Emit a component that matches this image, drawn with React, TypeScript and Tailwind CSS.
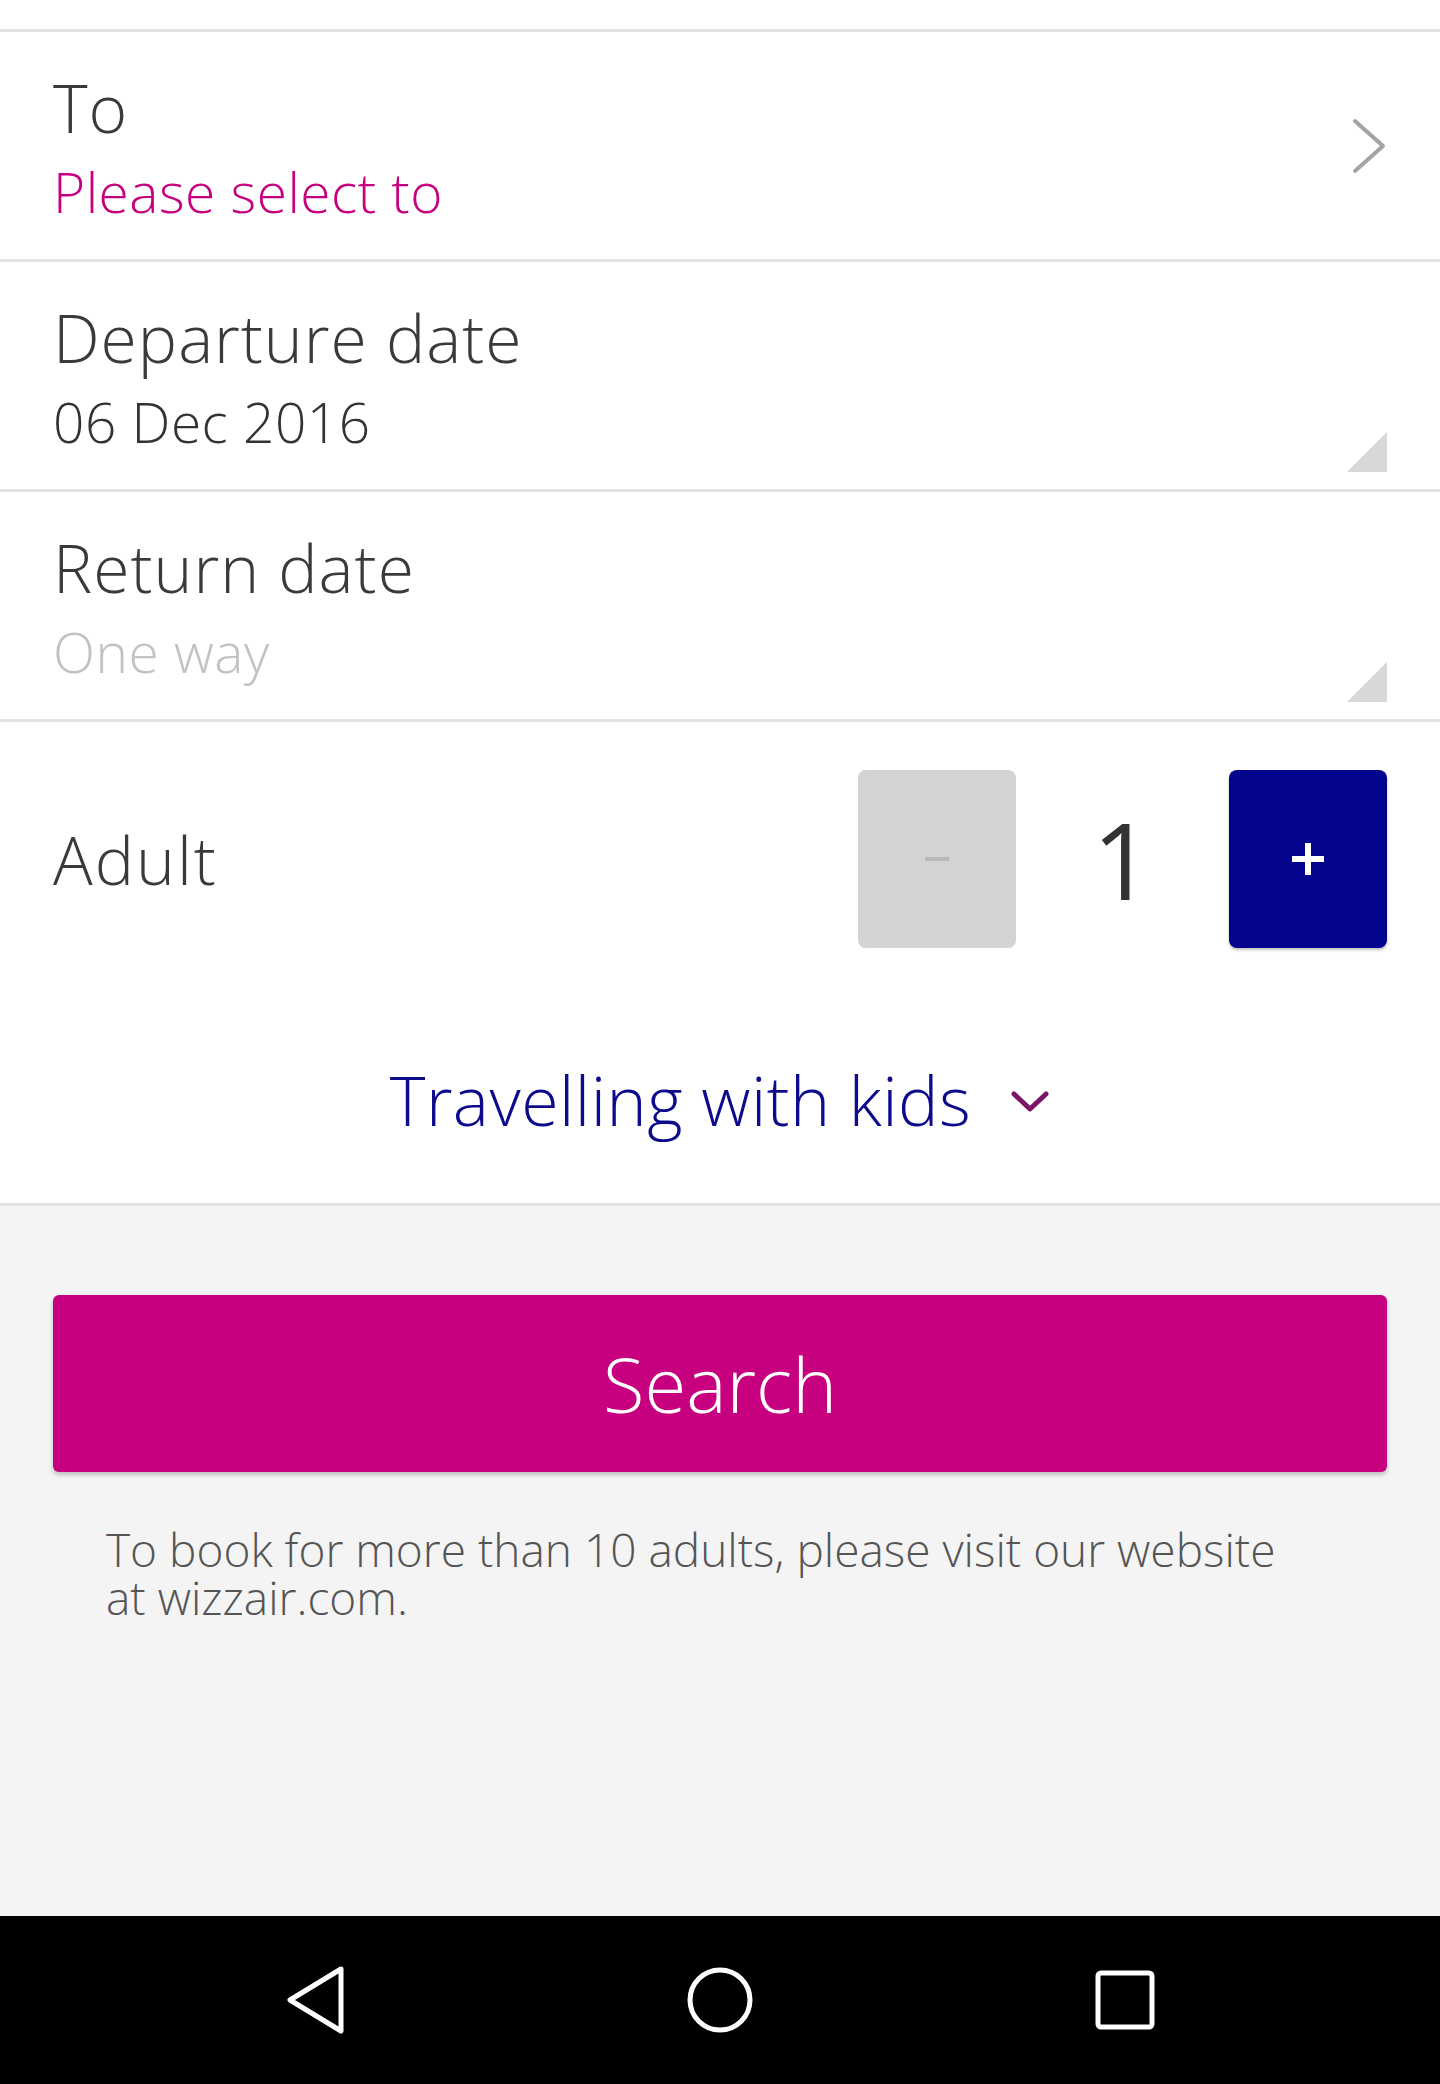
import React from 'react';

interface FieldRowProps {
    label: string;
    value: string;
    valueClass: string;
    trailing: 'chevron' | 'corner';
}

function ChevronRight() {
    return (
        <svg className="w-[36px] h-[58px] self-center" viewBox="0 0 36 58" fill="none" aria-hidden="true">
            <polyline points="4,4 32,29 4,54" stroke="#a3a3a3" strokeWidth="4" strokeLinecap="round" strokeLinejoin="round" />
        </svg>
    );
}

function CornerMark() {
    return (
        <svg className="w-[40px] h-[40px] self-end mb-[17px]" viewBox="0 0 40 40" aria-hidden="true">
            <polygon points="40,0 40,40 0,40" fill="#d8d8d8" />
        </svg>
    );
}

/**
 * One selectable field of the search form (destination, dates)
 */
function FieldRow({ label, value, valueClass, trailing }: FieldRowProps) {
    return (
        <div className="h-[230px] flex justify-between px-[53px] bg-white border-b-[3px] border-[#e4e4e4]">
            <div className="flex flex-col pt-[37px]">
                <span className="text-[66px] leading-[76px] tracking-[1px] font-light text-[#3a3a3a]">{label}</span>
                <span className={`mt-[15px] text-[55px] leading-[64px] tracking-[0.5px] font-light ${valueClass}`}>{value}</span>
            </div>
            {trailing === 'chevron' ? <ChevronRight /> : <CornerMark />}
        </div>
    );
}

function NavBar() {
    return (
        <div className="h-[168px] bg-black flex items-center justify-center">
            <div className="w-[405px] flex justify-center">
                <svg className="w-[58px] h-[70px]" viewBox="0 0 58 70" fill="none" aria-hidden="true">
                    <polygon points="55,4 4,35 55,66" stroke="#ffffff" strokeWidth="5" strokeLinejoin="round" />
                </svg>
            </div>
            <div className="w-[405px] flex justify-center">
                <svg className="w-[68px] h-[68px]" viewBox="0 0 68 68" fill="none" aria-hidden="true">
                    <circle cx="34" cy="34" r="30" stroke="#ffffff" strokeWidth="5" />
                </svg>
            </div>
            <div className="w-[405px] flex justify-center">
                <svg className="w-[60px] h-[60px]" viewBox="0 0 60 60" fill="none" aria-hidden="true">
                    <rect x="3" y="3" width="54" height="54" rx="3" stroke="#ffffff" strokeWidth="5" />
                </svg>
            </div>
        </div>
    );
}

export default function App() {
    return (
        <div className="w-[1440px] h-[2084px] flex flex-col bg-[#f4f4f4] font-['Open_Sans',sans-serif] overflow-hidden">
            <div className="h-[32px] bg-white border-b-[3px] border-[#e4e4e4]" />

            <FieldRow label="To" value="Please select to" valueClass="text-[#c6007e]" trailing="chevron" />
            <FieldRow label="Departure date" value="06 Dec 2016" valueClass="text-[#333333]" trailing="corner" />
            <FieldRow label="Return date" value="One way" valueClass="text-[#c2c2c2]" trailing="corner" />

            <div className="bg-white border-b-[3px] border-[#e4e4e4] pt-[48px] pb-[65px]">
                <div className="flex items-center justify-between px-[53px]">
                    <span className="text-[66px] leading-[76px] tracking-[2px] font-light text-[#3a3a3a]">Adult</span>
                    <div className="flex items-center">
                        <button className="w-[158px] h-[178px] rounded-[8px] bg-[#d3d3d3] flex items-center justify-center" aria-label="Decrease adults">
                            <span className="block w-[24px] h-[4px] bg-[#b8b8b8]" />
                        </button>
                        <span className="w-[213px] text-center text-[106px] leading-none font-normal text-[#333333]">1</span>
                        <button className="w-[158px] h-[178px] rounded-[8px] bg-[#04048f] shadow-[0_2px_3px_rgba(0,0,0,0.25)] flex items-center justify-center" aria-label="Increase adults">
                            <svg className="w-[34px] h-[34px]" viewBox="0 0 34 34" aria-hidden="true">
                                <rect x="14" y="1" width="6" height="32" fill="#ffffff" />
                                <rect x="1" y="14" width="32" height="6" fill="#ffffff" />
                            </svg>
                        </button>
                    </div>
                </div>
                <div className="mt-[114px] flex items-center justify-center gap-[39px]">
                    <span className="text-[68px] leading-[76px] tracking-[0.5px] font-light text-[#0d0b8c]">Travelling with kids</span>
                    <svg className="w-[40px] h-[24px] mt-[4px]" viewBox="0 0 40 24" fill="none" aria-hidden="true">
                        <polyline points="4,4 20,19 36,4" stroke="#7a1668" strokeWidth="5" strokeLinecap="round" strokeLinejoin="round" />
                    </svg>
                </div>
            </div>

            <div className="flex-1 flex flex-col px-[53px]">
                <button className="mt-[89px] h-[177px] w-full rounded-[6px] bg-[#c6007e] shadow-[0_3px_4px_rgba(0,0,0,0.22)] text-white text-[76px] font-light">
                    Search
                </button>
                <div className="mt-[53px] px-[53px] flex flex-col text-[46px] leading-[48px] font-light text-[#555555]">
                    <span>To book for more than 10 adults, please visit our website</span>
                    <span>at wizzair.com.</span>
                </div>
            </div>

            <NavBar />
        </div>
    );
}
